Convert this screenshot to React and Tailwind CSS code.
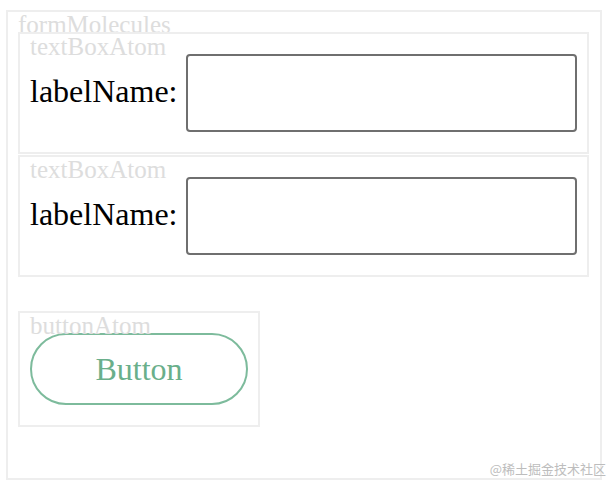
import React from "react";

function TextBoxAtom({ className = "" }) {
  return (
    <div className={`relative border-2 border-[#eeeeee] pt-[20px] pb-[20px] pl-[10px] pr-[10px] ${className}`}>
      <span className="absolute left-[10px] top-0 text-[25px] leading-none text-[#dddddd]">textBoxAtom</span>
      <div className="flex items-center gap-[9px]">
        <span className="text-[32px] leading-none text-black mb-[4px] whitespace-nowrap">labelName:</span>
        <input className="flex-1 h-[78px] min-w-0 border-2 border-[#6f6f6f] rounded-[4px] bg-white outline-none" />
      </div>
    </div>
  );
}

export default function App() {
  return (
    <div className="relative w-[608px] h-[488px] bg-white" style={{ fontFamily: '"Liberation Serif", "Times New Roman", serif' }}>
      <div className="pt-[10px] pl-[6px]">
        <div className="relative w-[596px] h-[470px] border-2 border-[#eeeeee] pt-[20px] pl-[10px] pr-[11px]">
          <span className="absolute left-[10px] top-0 text-[25px] leading-none text-[#dddddd]">formMolecules</span>
          <TextBoxAtom />
          <TextBoxAtom className="mt-px" />
          <div className="relative mt-[34px] w-[242px] border-2 border-[#eeeeee] pt-[20px] pb-[20px] pl-[10px] pr-[10px]">
            <span className="absolute left-[10px] top-0 text-[25px] leading-none text-[#dddddd]">buttonAtom</span>
            <button className="w-[218px] h-[72px] rounded-full border-2 border-[#7dbb9c] bg-transparent text-[32px] leading-none text-[#6aaf8b] flex items-center justify-center">
              Button
            </button>
          </div>
        </div>
      </div>
      <span
        className="absolute right-[2px] top-[462px] text-[13px] leading-none text-[#bdbdbd] whitespace-nowrap"
        style={{ fontFamily: '"Noto Sans CJK SC", sans-serif' }}
      >
        @稀土掘金技术社区
      </span>
    </div>
  );
}
